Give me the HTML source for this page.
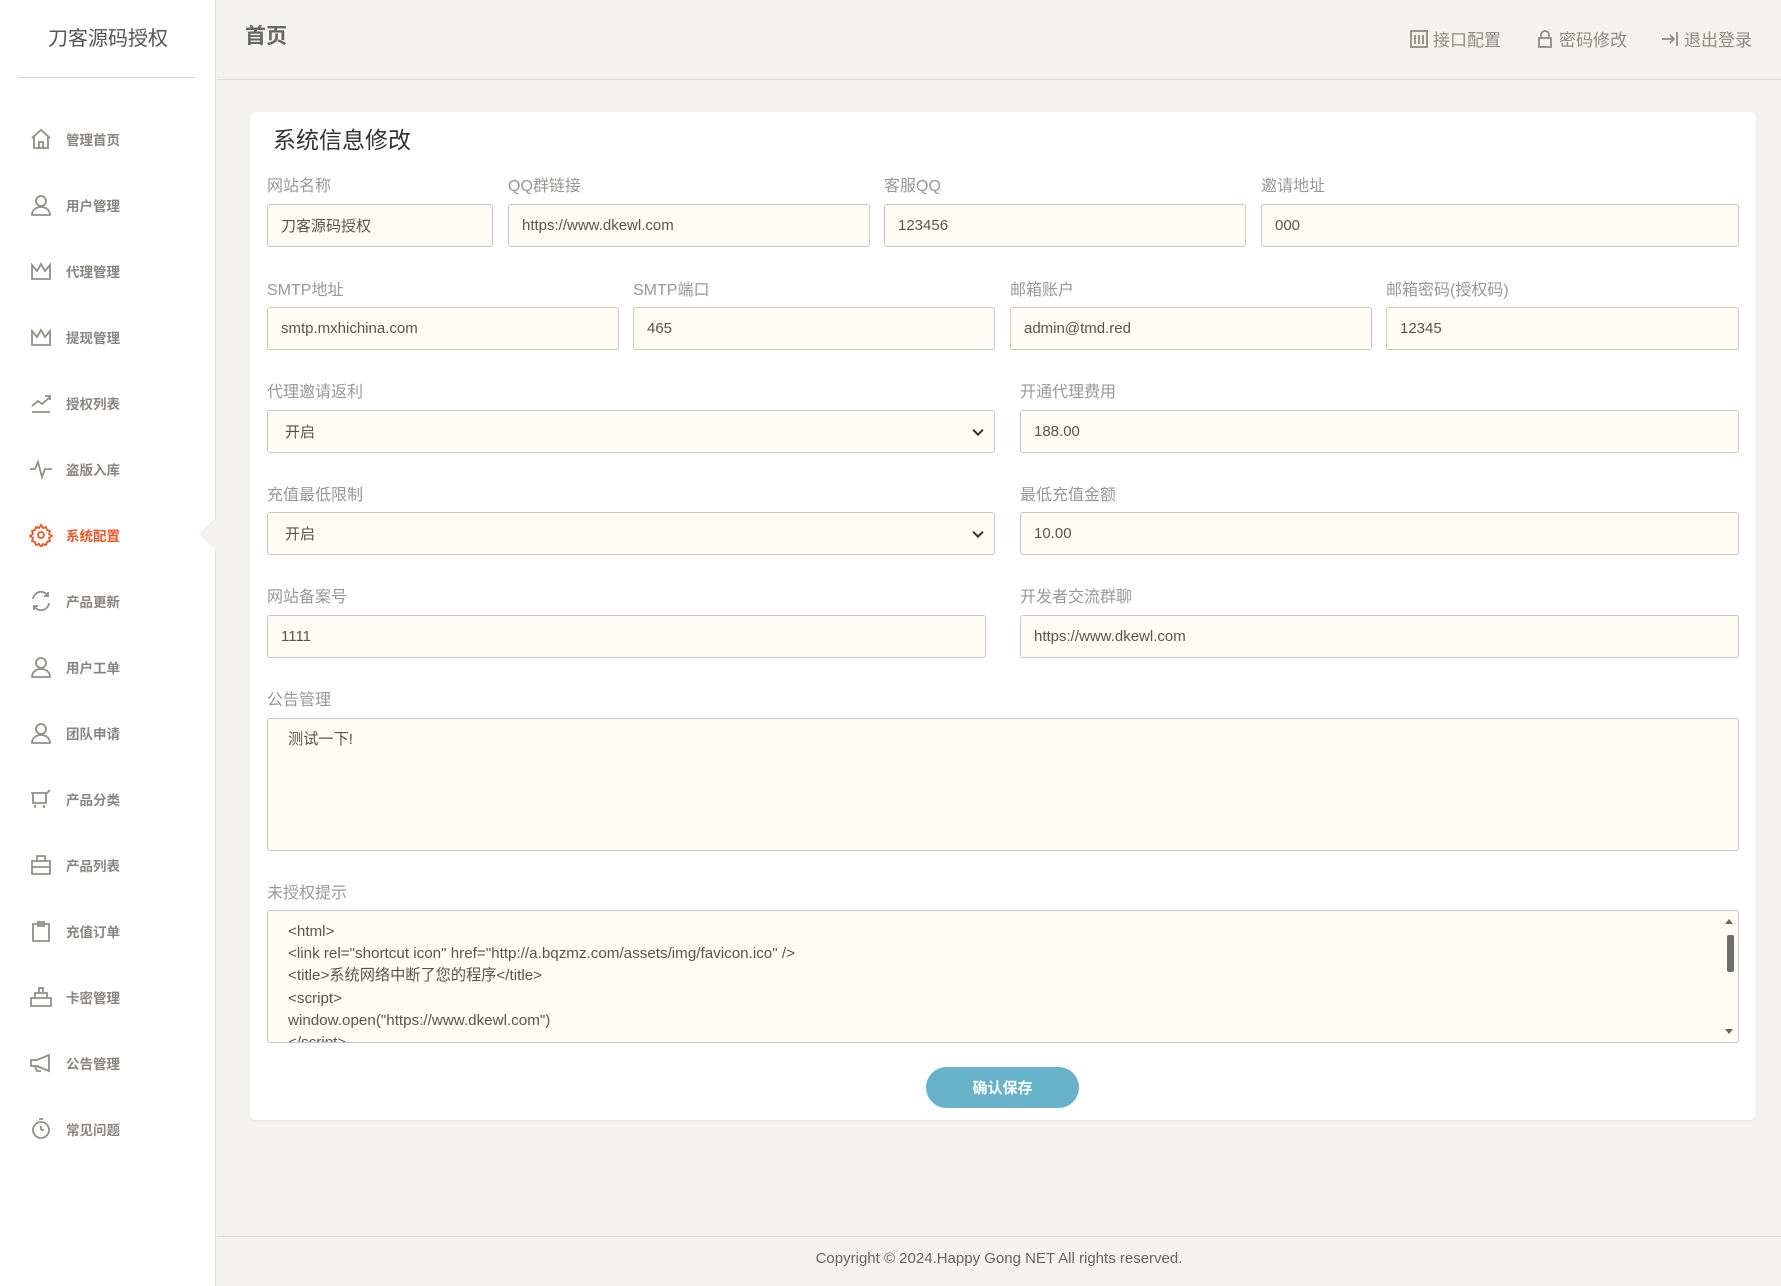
<!DOCTYPE html>
<html><head><meta charset="utf-8"><style>
*{margin:0;padding:0;box-sizing:border-box}
body{width:1781px;height:1286px;background:#f3f2ef;font-family:"Liberation Sans","Noto Sans CJK SC",sans-serif;position:relative;overflow:hidden;color:#555}
.side{position:absolute;left:0;top:0;width:216px;height:1286px;background:#fff;border-right:1px solid #e2e0dc}
.logo{position:absolute;left:0;width:216px;top:22px;text-align:center;font-size:20px;color:#555}
.sdiv{position:absolute;left:19px;top:77px;width:176px;height:1px;background:#d4d2ce}
.item{position:absolute;left:29px;height:24px;display:flex;align-items:center;font-size:13.5px;font-weight:bold;color:#8a8580}
.item svg{width:24px;height:24px;margin-right:13px;fill:none;stroke:#938e88;stroke-width:1.8}
.item.act{color:#e8572a}.item.act svg{stroke:#e8572a}
.notch{position:absolute;left:199px;top:517px;width:0;height:0;border-top:17px solid transparent;border-bottom:17px solid transparent;border-right:17px solid #f3f2ef}
.hline{position:absolute;left:217px;top:79px;right:0;height:1px;background:#dcdad6}
.htitle{position:absolute;left:245px;top:20px;font-size:21px;font-weight:bold;color:#666}
.hr{position:absolute;top:26px;font-size:17px;color:#8f8b86;display:flex;align-items:center}
.hr svg{width:18px;height:18px;margin-right:5px;fill:none;stroke:#8f8b86;stroke-width:1.8}
.card{position:absolute;left:250px;top:112px;width:1506px;height:1008px;background:#fff;border-radius:6px;box-shadow:0 1px 2px rgba(0,0,0,.05)}
.ctitle{position:absolute;left:273px;top:121px;font-size:23px;color:#333}
.lb{position:absolute;font-size:16px;color:#9a9896;margin-top:-3px}
.in{position:absolute;background:#fffcf5;border:1px solid #cbc7c1;border-radius:3px;font-size:15px;color:#555;padding-left:13px;display:flex;align-items:center}
.sel::after{content:"";position:absolute;right:12px;top:50%;width:6px;height:6px;border-right:2px solid #333;border-bottom:2px solid #333;transform:translateY(-70%) rotate(45deg)}
.ta{position:absolute;background:#fffcf5;border:1px solid #cbc7c1;border-radius:3px;font-size:15.2px;color:#555;padding:10px 20px;overflow:hidden;line-height:22.2px}
.btn{position:absolute;left:926px;top:1067px;width:153px;height:41px;border-radius:21px;background:#67b1c9;color:#fff;font-size:15px;font-weight:bold;display:flex;align-items:center;justify-content:center}
.fline{position:absolute;left:217px;top:1236px;right:0;height:1px;background:#dcdad6}
.foot{position:absolute;left:217px;right:0;top:1250px;text-align:center;font-size:15px;color:#666}
</style></head><body>
<div class="side">
<div class="logo">刀客源码授权</div><div class="sdiv"></div>
<div class="item" style="top:127px"><svg viewBox="0 0 24 24"><path d="M3 11L12 3l9 8M5 9v12h14V9M10 21v-6h4v6"/></svg>管理首页</div>
<div class="item" style="top:193px"><svg viewBox="0 0 24 24"><circle cx="12" cy="8" r="5"/><path d="M3 22c0-5 4-8 9-8s9 3 9 8z"/></svg>用户管理</div>
<div class="item" style="top:259px"><svg viewBox="0 0 24 24"><path d="M3 6l5 6 4-7 4 7 5-6v14H3z"/></svg>代理管理</div>
<div class="item" style="top:325px"><svg viewBox="0 0 24 24"><path d="M3 6l5 6 4-7 4 7 5-6v14H3z"/></svg>提现管理</div>
<div class="item" style="top:391px"><svg viewBox="0 0 24 24"><path d="M3 15l6-5 4 3 8-7M16 5h5v4M3 21h18"/></svg>授权列表</div>
<div class="item" style="top:457px"><svg viewBox="0 0 24 24"><path d="M1 12h5l3-7 4 15 3-8h7"/></svg>盗版入库</div>
<div class="item act" style="top:523px"><svg viewBox="0 0 24 24"><circle cx="12" cy="12" r="3"/><path d="M12 2l2 3 3-1 1 3 3 1-1 3 3 2-3 2 1 3-3 1-1 3-3-1-2 3-2-3-3 1-1-3-3-1 1-3-3-2 3-2-1-3 3-1 1-3 3 1z"/></svg>系统配置</div>
<div class="item" style="top:589px"><svg viewBox="0 0 24 24"><path d="M4 10a8 8 0 0 1 15-3M20 14a8 8 0 0 1-15 3M19 3v4h-4M5 21v-4h4"/></svg>产品更新</div>
<div class="item" style="top:655px"><svg viewBox="0 0 24 24"><circle cx="12" cy="8" r="5"/><path d="M3 22c0-5 4-8 9-8s9 3 9 8z"/></svg>用户工单</div>
<div class="item" style="top:721px"><svg viewBox="0 0 24 24"><circle cx="12" cy="8" r="5"/><path d="M3 22c0-5 4-8 9-8s9 3 9 8z"/></svg>团队申请</div>
<div class="item" style="top:787px"><svg viewBox="0 0 24 24"><path d="M2 6h16l3-3M4 6v10h13V6M6 18v3M15 18v3"/></svg>产品分类</div>
<div class="item" style="top:853px"><svg viewBox="0 0 24 24"><path d="M3 8h18v13H3zM8 8V3h8v5M3 14h18"/></svg>产品列表</div>
<div class="item" style="top:919px"><svg viewBox="0 0 24 24"><path d="M4 5h16v17H4zM9 3h6v4H9z"/></svg>充值订单</div>
<div class="item" style="top:985px"><svg viewBox="0 0 24 24"><path d="M2 13h20v8H2zM6 13V8h12v5M10 8V3h4v5"/></svg>卡密管理</div>
<div class="item" style="top:1051px"><svg viewBox="0 0 24 24"><path d="M2 9h6l12-5v16L8 15H2zM6 15l2 5h4"/></svg>公告管理</div>
<div class="item" style="top:1117px"><svg viewBox="0 0 24 24"><circle cx="12" cy="13" r="8"/><path d="M12 13V9M12 13h3M10 2h4"/></svg>常见问题</div>
</div>
<div class="notch"></div>
<div class="htitle">首页</div><div class="hline"></div>
<div class="hr" style="left:1410px"><svg viewBox="0 0 18 18"><rect x="1" y="1" width="16" height="16"/><path d="M5 5v9M9 5v9M13 5v9"/></svg>接口配置</div>
<div class="hr" style="left:1536px"><svg viewBox="0 0 18 18"><rect x="3" y="8" width="12" height="9"/><path d="M5 8V5a4 4 0 0 1 8 0v3"/></svg>密码修改</div>
<div class="hr" style="left:1661px"><svg viewBox="0 0 18 18"><path d="M1 9h12M9 5l4 4-4 4M16 2v14"/></svg>退出登录</div>
<div class="card"></div>
<div class="ctitle">系统信息修改</div>

<div class="lb" style="left:267px;top:175px">网站名称</div>
<div class="lb" style="left:508px;top:175px">QQ群链接</div>
<div class="lb" style="left:884px;top:175px">客服QQ</div>
<div class="lb" style="left:1261px;top:175px">邀请地址</div>
<div class="in" style="left:267px;top:204px;width:226px;height:43px">刀客源码授权</div>
<div class="in" style="left:508px;top:204px;width:362px;height:43px">https://www.dkewl.com</div>
<div class="in" style="left:884px;top:204px;width:362px;height:43px">123456</div>
<div class="in" style="left:1261px;top:204px;width:478px;height:43px">000</div>

<div class="lb" style="left:267px;top:279px">SMTP地址</div>
<div class="lb" style="left:633px;top:279px">SMTP端口</div>
<div class="lb" style="left:1010px;top:279px">邮箱账户</div>
<div class="lb" style="left:1386px;top:279px">邮箱密码(授权码)</div>
<div class="in" style="left:267px;top:307px;width:352px;height:43px">smtp.mxhichina.com</div>
<div class="in" style="left:633px;top:307px;width:362px;height:43px">465</div>
<div class="in" style="left:1010px;top:307px;width:362px;height:43px">admin@tmd.red</div>
<div class="in" style="left:1386px;top:307px;width:353px;height:43px">12345</div>

<div class="lb" style="left:267px;top:381px">代理邀请返利</div>
<div class="lb" style="left:1020px;top:381px">开通代理费用</div>
<div class="in sel" style="left:267px;top:410px;width:728px;height:43px;padding-left:17px">开启</div>
<div class="in" style="left:1020px;top:410px;width:719px;height:43px">188.00</div>

<div class="lb" style="left:267px;top:484px">充值最低限制</div>
<div class="lb" style="left:1020px;top:484px">最低充值金额</div>
<div class="in sel" style="left:267px;top:512px;width:728px;height:43px;padding-left:17px">开启</div>
<div class="in" style="left:1020px;top:512px;width:719px;height:43px">10.00</div>

<div class="lb" style="left:267px;top:586px">网站备案号</div>
<div class="lb" style="left:1020px;top:586px">开发者交流群聊</div>
<div class="in" style="left:267px;top:615px;width:719px;height:43px">1111</div>
<div class="in" style="left:1020px;top:615px;width:719px;height:43px">https://www.dkewl.com</div>

<div class="lb" style="left:267px;top:689px">公告管理</div>
<div class="ta" style="left:267px;top:718px;width:1472px;height:133px;padding-top:10px">测试一下!</div>

<div class="lb" style="left:267px;top:882px">未授权提示</div>
<div class="ta" style="left:267px;top:910px;width:1472px;height:133px;padding-top:10px">&lt;html&gt;<br>&lt;link rel="shortcut icon" href="http://a.bqzmz.com/assets/img/favicon.ico" /&gt;<br>&lt;title&gt;系统网络中断了您的程序&lt;/title&gt;<br>&lt;script&gt;<br>window.open("https://www.dkewl.com")<br>&lt;/script&gt;
<div style="position:absolute;right:4px;top:24px;width:7px;height:37px;background:#6f6f6f;border-radius:2px"></div>
<div style="position:absolute;right:5px;top:8px;border-left:4px solid transparent;border-right:4px solid transparent;border-bottom:5px solid #666"></div>
<div style="position:absolute;right:5px;bottom:8px;border-left:4px solid transparent;border-right:4px solid transparent;border-top:5px solid #666"></div></div>

<div class="btn">确认保存</div>
<div class="fline"></div>
<div class="foot">Copyright © 2024.Happy Gong NET All rights reserved.</div>
</body></html>
